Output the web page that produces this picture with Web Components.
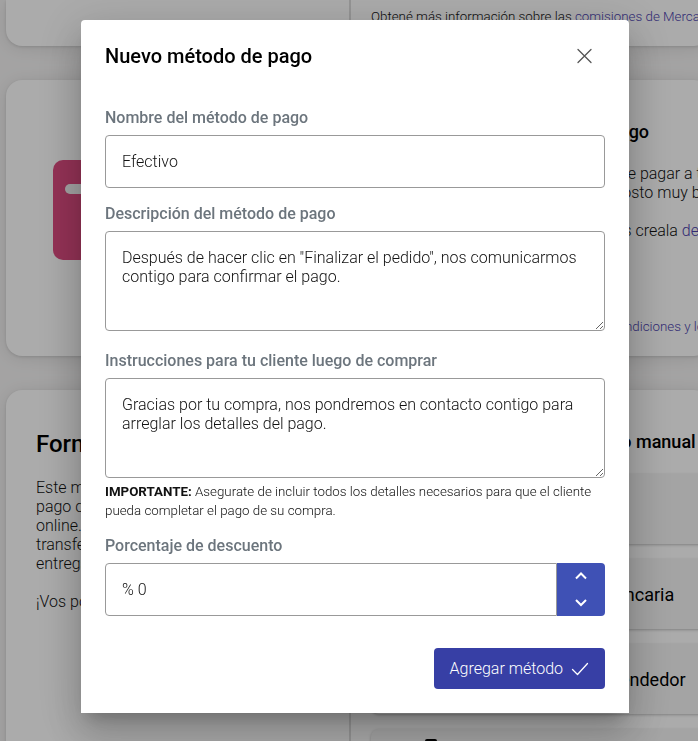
<!DOCTYPE html>
<html lang="es">
<head>
<meta charset="utf-8">
<meta name="viewport" content="width=device-width, initial-scale=1">
<title>Métodos de pago</title>
<style>
    html, body{
        margin: 0;
        height: 100%;
        overflow: hidden;
        background-color: #f5f4f4;
        color: #111;
        font-family: Roboto, "Liberation Sans", sans-serif;
        font-size: 16px;
        font-weight: 300;
        line-height: 19px;
    }

    main{
        display: flex;
        flex-direction: column;
        gap: 34px;
        margin: 0 -12px 0 6px;
    }

    p, h2, h3{
        margin: 0;
    }

    h2{
        font-size: 24px;
        font-weight: 500;
        line-height: 28px;
        color: #000;
    }

    h3{
        font-size: 18px;
        font-weight: 500;
        line-height: 24px;
        color: #000;
    }

    b{
        font-weight: 700;
    }

    a{
        color: #4b3fae;
        text-decoration: none;
    }

    main p, main h3, main small{
        white-space: nowrap;
    }

    .terms{
        margin-top: auto;
    }
</style>
</head>
<body>

<main>
    <info-card flat>
        <small>Obtené más información sobre las <a href="#">comisiones de Mercado Pago</a></small>
    </info-card>

    <info-card tall>
        <card-icon slot="side"></card-icon>
        <h3>Conectar cuenta de Mercado Pago</h3>
        <p>Tus clientes podrán tener la opción de pagar a través<br>
        través de Mercado Pago, siendo el costo muy bajo.<br><br>
        Si aún no tenés una cuenta, entonces creala <a href="#">desde acá</a></p>
        <small class="terms">Al usarlo estás aceptando los términos y co<a href="#">ndiciones y los permisos</a></small>
    </info-card>

    <info-card tall>
        <h2 slot="side">Formas de pago</h2>
        <p slot="side">Este medio no depende del<br>pago con tarjeta ni de cobros<br>online. Podés aceptar una<br>transferencia, efectivo o pago<br>entregando el producto.<br><br>¡Vos podés elegir!</p>
        <h3>Personalizar un método de pago manual</h3>
        <div>
            <method-item>Efectivo</method-item>
            <method-item>Transferencia bancaria</method-item>
            <method-item>Acordar con el vendedor</method-item>
            <method-item icon>Otro método</method-item>
        </div>
    </info-card>
</main>

<payment-modal heading="Nuevo método de pago">
    <form-field label="Nombre del método de pago" value="Efectivo"></form-field>
    <form-field multiline label="Descripción del método de pago" value='Después de hacer clic en "Finalizar el pedido", nos comunicarmos contigo para confirmar el pago.'></form-field>
    <form-field multiline label="Instrucciones para tu cliente luego de comprar" value="Gracias por tu compra, nos pondremos en contacto contigo para arreglar los detalles del pago.">
        <small><b>IMPORTANTE:</b> Asegurate de incluir todos los detalles necesarios para que el cliente pueda completar el pago de su compra.</small>
    </form-field>
    <percent-field label="Porcentaje de descuento" value="0"></percent-field>
    <submit-button slot="actions">Agregar método</submit-button>
</payment-modal>

<template id="info-card">
    <style>
        :host{
            display: flex;
            background-color: white;
            border-radius: 16px;
            box-shadow: 0 1px 3px rgba(0, 0, 0, .12), 0 2px 18px rgba(0, 0, 0, .1);
        }

        :host([flat]){
            border-radius: 0 0 16px 16px;
        }

        :host([tall]){
            min-height: 276px;
        }

        .side, .content{
            display: flex;
            flex-direction: column;
            gap: 20px;
            box-sizing: border-box;
            padding: 40px 30px 20px;
        }

        .side{
            flex: 0 0 345px;
            border-right: 2px solid #ddd;
        }

        .content{
            flex: 1;
            min-width: 0;
            padding-left: 20px;
            padding-right: 0;
        }

        :host([flat]) .side, :host([flat]) .content{
            padding-top: 7px;
        }
    </style>
    <div class="side"><slot name="side"></slot></div>
    <div class="content"><slot></slot></div>
</template>

<template id="card-icon">
    <style>
        :host{
            display: flex;
            justify-content: center;
            padding: 40px 0;
        }
    </style>
    <svg width="250" height="100" viewBox="0 0 250 100" aria-hidden="true">
        <rect width="250" height="100" rx="10" fill="#dd4b80"/>
        <rect x="12" y="24" width="120" height="10" rx="5" fill="#f4f4f4"/>
    </svg>
</template>

<template id="method-item">
    <style>
        :host{
            display: grid;
            grid-template-columns: 120px 1fr;
            align-items: center;
            height: 70px;
            margin-bottom: 15px;
            border-radius: 8px;
            background-color: #f5f5f5;
            box-shadow: 0 1px 3px rgba(0, 0, 0, .25);
            color: #000;
            font-size: 18px;
            font-weight: 400;
            white-space: nowrap;
        }

        svg{
            display: none;
            justify-self: center;
        }

        :host([icon]) svg{
            display: block;
        }

        span{
            grid-column: 2;
        }
    </style>
    <svg width="50" height="50" viewBox="0 0 50 50" aria-hidden="true">
        <path d="M21 0h8q2 0 2 2v8H19V2q0-2 2-2z"/>
        <path d="M3 10h44v36H3z"/>
    </svg>
    <span><slot></slot></span>
</template>

<template id="payment-modal">
    <style>
        :host{
            position: fixed;
            inset: 0 -12px 0 0;
            display: flex;
            justify-content: center;
            align-items: flex-start;
            padding: 20px;
            background-color: rgba(0, 0, 0, .33);
        }

        section{
            flex: 0 1 548px;
            box-sizing: border-box;
            padding: 24px;
            border-radius: 4px 4px 0 0;
            background-color: white;
            box-shadow: 0 11px 15px -7px rgba(0, 0, 0, .2), 0 24px 38px 3px rgba(0, 0, 0, .14), 0 9px 46px 8px rgba(0, 0, 0, .12);
        }

        header{
            display: flex;
            justify-content: space-between;
            align-items: center;
            margin-bottom: 40px;
        }

        h1{
            margin: 0;
            font-size: 20px;
            font-weight: 500;
            line-height: 24px;
            color: #000;
        }

        button{
            display: flex;
            padding: 0 12px;
            border: 0;
            background: none;
            cursor: pointer;
        }

        .fields{
            display: flex;
            flex-direction: column;
            gap: 16px;
        }

        footer{
            display: flex;
            justify-content: flex-end;
            margin-top: 32px;
        }
    </style>
    <section role="dialog" aria-labelledby="title">
        <header>
            <h1 id="title"></h1>
            <button type="button" aria-label="Cerrar">
                <svg width="17" height="17" viewBox="0 0 17 17" fill="none" stroke="#555" stroke-width="1.3" stroke-linecap="round">
                    <path d="M2 1.500l13 13M15 1.500L2 14.500"/>
                </svg>
            </button>
        </header>
        <div class="fields"><slot></slot></div>
        <footer><slot name="actions"></slot></footer>
    </section>
</template>

<template id="form-field">
    <style>
        :host{
            display: flex;
            flex-direction: column;
        }

        label{
            margin-bottom: 8px;
            color: #6c757d;
            font-weight: 500;
        }

        input, textarea{
            box-sizing: border-box;
            width: 100%;
            margin: 0;
            padding: 16px;
            border: 1px solid #999;
            border-radius: 4px;
            outline: 0;
            background-color: white;
            color: #111;
            font: inherit;
        }

        input{
            height: 53px;
        }

        textarea{
            display: block;
            height: 100px;
            margin-bottom: 4px;
            resize: vertical;
        }
    </style>
    <label for="control"></label>
    <slot></slot>
</template>

<template id="percent-field">
    <style>
        :host{
            display: block;
        }

        label{
            display: block;
            margin-bottom: 8px;
            color: #6c757d;
            font-weight: 500;
        }

        .row{
            display: flex;
            height: 53px;
        }

        input{
            flex: 1;
            min-width: 0;
            padding: 0 16px;
            border: 1px solid #999;
            border-radius: 4px 0 0 4px;
            outline: 0;
            color: #111;
            font: inherit;
        }

        .steps{
            display: flex;
            flex-direction: column;
            width: 48px;
            overflow: hidden;
            border-radius: 0 4px 4px 0;
            background-color: #3f51b5;
        }

        button{
            flex: 1;
            display: flex;
            justify-content: center;
            align-items: center;
            padding: 0;
            border: 0;
            background: none;
            cursor: pointer;
        }
    </style>
    <label for="control"></label>
    <div class="row">
        <input id="control" type="text">
        <div class="steps">
            <button type="button" class="up" aria-label="Aumentar">
                <svg width="12" height="8" viewBox="0 0 12 8" fill="none" stroke="white" stroke-width="2"><path d="M1 6.5l5-5 5 5"/></svg>
            </button>
            <button type="button" class="down" aria-label="Disminuir">
                <svg width="12" height="8" viewBox="0 0 12 8" fill="none" stroke="white" stroke-width="2"><path d="M1 1l5 5 5-5"/></svg>
            </button>
        </div>
    </div>
</template>

<template id="submit-button">
    <style>
        :host{
            display: block;
        }

        button{
            display: flex;
            align-items: center;
            gap: 8px;
            height: 41px;
            padding: 0 16px;
            border: 0;
            border-radius: 4px;
            background-color: #373fa5;
            color: white;
            font: inherit;
            cursor: pointer;
        }
    </style>
    <button type="submit">
        <slot></slot>
        <svg width="18" height="14" viewBox="0 0 18 14" fill="none" stroke="white" stroke-width="1.3" stroke-linecap="round" stroke-linejoin="round" aria-hidden="true">
            <path d="M1.500 7.500l5 5L16.500 1.500"/>
        </svg>
    </button>
</template>

<script>
class BaseElement extends HTMLElement {
  constructor() {
    super();

    const template = document.getElementById(this.localName);
    this.attachShadow({ mode: 'open' });
    this.shadowRoot.appendChild(template.content.cloneNode(true));
  }
}

class InfoCard extends BaseElement {}
class CardIcon extends BaseElement {}
class MethodItem extends BaseElement {}
class SubmitButton extends BaseElement {}

class PaymentModal extends BaseElement {
  connectedCallback() {
    this.shadowRoot.querySelector('h1').textContent = this.getAttribute('heading');
    this.shadowRoot.querySelector('button').addEventListener('click', () => this.remove());
  }
}

class FormField extends BaseElement {
  connectedCallback() {
    const label = this.shadowRoot.querySelector('label');
    const control = document.createElement(this.hasAttribute('multiline') ? 'textarea' : 'input');

    label.textContent = this.getAttribute('label');
    control.id = 'control';
    control.value = this.getAttribute('value');
    label.after(control);
  }
}

class PercentField extends BaseElement {
  connectedCallback() {
    this.number = Number(this.getAttribute('value'));
    this.input = this.shadowRoot.querySelector('input');
    this.shadowRoot.querySelector('label').textContent = this.getAttribute('label');
    this.shadowRoot.querySelector('.up').addEventListener('click', () => this.step(1));
    this.shadowRoot.querySelector('.down').addEventListener('click', () => this.step(-1));
    this.step(0);
  }

  step(amount) {
    this.number = Math.min(100, Math.max(0, this.number + amount));
    this.input.value = '% ' + this.number;
  }
}

window.customElements.define('info-card', InfoCard);
window.customElements.define('card-icon', CardIcon);
window.customElements.define('method-item', MethodItem);
window.customElements.define('submit-button', SubmitButton);
window.customElements.define('payment-modal', PaymentModal);
window.customElements.define('form-field', FormField);
window.customElements.define('percent-field', PercentField);
</script>
</body>
</html>
